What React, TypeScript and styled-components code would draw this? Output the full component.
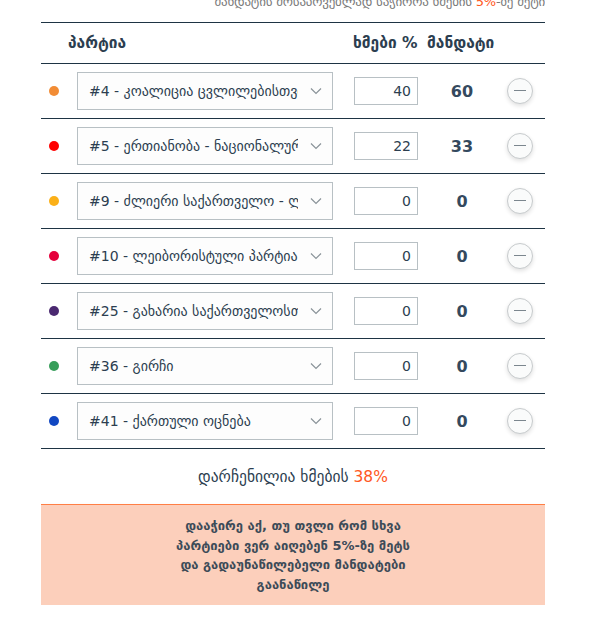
import React, { useState } from 'react';
import styled, { createGlobalStyle } from 'styled-components';

interface Party {
  id: number;
  name: string;
  color: string;
  votes: number;
  mandates: number;
}

const GlobalStyle = createGlobalStyle`
  body {
    margin: 0;
    background: #ffffff;
    font-family: 'DejaVu Sans', 'Noto Sans', sans-serif;
    color: #2c3e50;
  }
`;

const Page = styled.div`
  width: 504px;
  margin-left: 41px;
  overflow: hidden;
`;

const Note = styled.div`
  margin-top: -6px;
  height: 28px;
  text-align: right;
  font-size: 13px;
  line-height: 15px;
  color: #7a7a7a;
  letter-spacing: -0.2px;
`;

const Accent = styled.span`
  color: #ff5722;
`;

const Row = styled.div<{ $head?: boolean }>`
  display: grid;
  grid-template-columns: 27px 285px 67px 84px 41px;
  align-items: center;
  height: ${(p) => (p.$head ? '40px' : '54px')};
  border-top: 1px solid #1e3444;
  &:last-of-type {
    border-bottom: 1px solid #1e3444;
  }
`;

const HeadCell = styled.div<{ $pad?: number }>`
  font-weight: 700;
  font-size: 15.5px;
  color: #2c3e50;
  padding-left: ${(p) => p.$pad ?? 0}px;
  white-space: nowrap;
`;

const Dot = styled.span<{ $color: string }>`
  display: block;
  width: 10px;
  height: 10px;
  border-radius: 50%;
  margin-left: 8px;
  background: ${(p) => p.$color};
`;

const SelectWrap = styled.div`
  position: relative;
  width: 256px;
  margin-left: 9px;
`;

const Select = styled.select`
  appearance: none;
  width: 100%;
  height: 38px;
  padding: 0 34px 0 11px;
  border: 1px solid #b8c0c4;
  border-radius: 0;
  background: #fdfdfd;
  font-family: 'DejaVu Sans', sans-serif;
  font-size: 14px;
  color: #2c3e50;
  outline: none;
`;

const Chevron = styled.svg`
  position: absolute;
  right: 11px;
  top: 15px;
  pointer-events: none;
`;

const VoteInput = styled.input`
  width: 64px;
  height: 28px;
  box-sizing: border-box;
  margin-left: 1px;
  border: 1px solid #b8c0c4;
  padding: 0 6px;
  text-align: right;
  font-family: 'DejaVu Sans', sans-serif;
  font-size: 14px;
  color: #2c3e50;
  outline: none;
`;

const Mandates = styled.div`
  text-align: center;
  font-weight: 700;
  font-size: 16px;
  color: #34495e;
`;

const RemoveButton = styled.button`
  width: 26px;
  height: 26px;
  margin-left: 3px;
  border-radius: 50%;
  border: 1px solid #c7cbcd;
  background: #fafbfb;
  box-shadow: 0 2px 4px rgba(0, 0, 0, 0.12);
  padding: 0;
  display: flex;
  align-items: center;
  justify-content: center;
  cursor: pointer;
`;

const Remaining = styled.div`
  margin-top: 19px;
  text-align: center;
  font-size: 15.5px;
  color: #2c3e50;
`;

const HintBox = styled.div`
  margin-top: 18px;
  background: #fccfbb;
  border-top: 1px solid #ff7f45;
  box-shadow: 0 3px 6px rgba(0, 0, 0, 0.08);
  padding: 11px 20px 11px;
  text-align: center;
  font-weight: 700;
  font-size: 13px;
  line-height: 19.5px;
  color: #3c4b58;
  cursor: pointer;
`;

const initialParties: Party[] = [
  { id: 4, name: 'კოალიცია ცვლილებისთვის', color: '#f28c35', votes: 40, mandates: 60 },
  { id: 5, name: 'ერთიანობა - ნაციონალური მოძრაობა', color: '#ff0000', votes: 22, mandates: 33 },
  { id: 9, name: 'ძლიერი საქართველო - ლელო', color: '#fbb018', votes: 0, mandates: 0 },
  { id: 10, name: 'ლეიბორისტული პარტია', color: '#e5003c', votes: 0, mandates: 0 },
  { id: 25, name: 'გახარია საქართველოსთვის', color: '#4a2870', votes: 0, mandates: 0 },
  { id: 36, name: 'გირჩი', color: '#379e5a', votes: 0, mandates: 0 },
  { id: 41, name: 'ქართული ოცნება', color: '#1147c2', votes: 0, mandates: 0 },
];

const App: React.FC = () => {
  const [parties, setParties] = useState<Party[]>(initialParties);

  const remaining = 100 - parties.reduce((sum, p) => sum + p.votes, 0);

  const setVotes = (id: number, value: string) => {
    const n = parseInt(value, 10) || 0;
    setParties(parties.map((p) => (p.id === id ? { ...p, votes: n } : p)));
  };

  const removeParty = (id: number) => {
    setParties(parties.filter((p) => p.id !== id));
  };

  return (
    <>
      <GlobalStyle />
      <Page>
        <Note>
          მანდატის მოსაპოვებლად საჭიროა ხმების <Accent>5%</Accent>-ზე მეტი
        </Note>
        <div>
          <Row $head>
            <span />
            <HeadCell>პარტია</HeadCell>
            <HeadCell>ხმები %</HeadCell>
            <HeadCell $pad={7}>მანდატი</HeadCell>
            <span />
          </Row>
          {parties.map((p) => (
            <Row key={p.id}>
              <Dot $color={p.color} />
              <SelectWrap>
                <Select defaultValue={p.id}>
                  {initialParties.map((o) => (
                    <option key={o.id} value={o.id}>
                      #{o.id} - {o.name}
                    </option>
                  ))}
                </Select>
                <Chevron width="12" height="8" viewBox="0 0 12 8">
                  <path d="M1 1.5 L6 6.5 L11 1.5" fill="none" stroke="#8a9399" strokeWidth="1.2" />
                </Chevron>
              </SelectWrap>
              <VoteInput value={p.votes} onChange={(e) => setVotes(p.id, e.target.value)} />
              <Mandates>{p.mandates}</Mandates>
              <RemoveButton onClick={() => removeParty(p.id)}>
                <svg width="12" height="2" viewBox="0 0 12 2">
                  <rect width="12" height="1" fill="#7b868e" />
                </svg>
              </RemoveButton>
            </Row>
          ))}
        </div>
        <Remaining>
          დარჩენილია ხმების <Accent>{remaining}%</Accent>
        </Remaining>
        <HintBox>
          დააჭირე აქ, თუ თვლი რომ სხვა
          <br />
          პარტიები ვერ აიღებენ 5%-ზე მეტს
          <br />
          და გადაუნაწილებელი მანდატები
          <br />
          გაანაწილე
        </HintBox>
      </Page>
    </>
  );
};

export default App;
